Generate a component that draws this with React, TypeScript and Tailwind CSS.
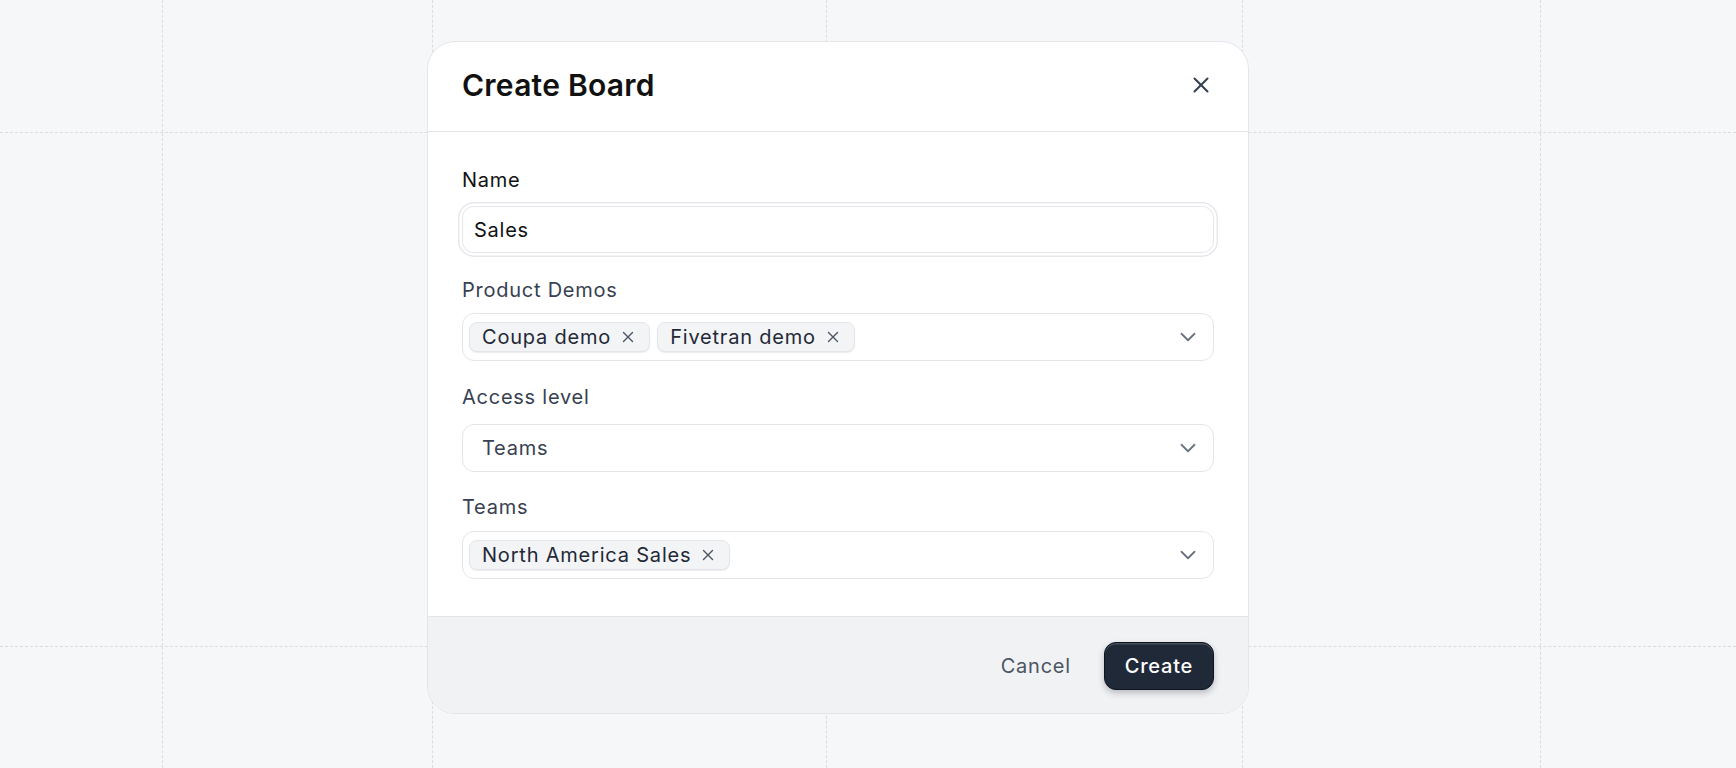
import React from 'react';
import { X, ChevronDown } from 'lucide-react';

const font = { fontFamily: 'Inter, "Noto Sans", sans-serif' };

const Chip: React.FC<{ label: string }> = ({ label }) => (
  <span className="flex h-[30px] items-center gap-[11px] rounded-[8px] border border-[#e3e5e9] bg-[#f3f4f6] pl-[12px] pr-[15px] text-[20px] leading-[28px] tracking-[0.8px] text-[#1f2937] shadow-[0_1px_1px_rgba(17,24,39,0.08)]">
    {label}
    <svg width="12" height="12" viewBox="0 0 12 12" className="text-[#4b5563]">
      <path d="M1.5 1.5l9 9M10.5 1.5l-9 9" stroke="currentColor" strokeWidth="1.4" strokeLinecap="round" />
    </svg>
  </span>
);

const SelectField: React.FC<{ children: React.ReactNode; padded?: boolean }> = ({ children, padded }) => (
  <div
    className={`flex h-[48px] items-center justify-between rounded-[12px] border-[1.5px] border-[#e3e5e9] bg-white pr-[12px] ${
      padded ? 'pl-[19px]' : 'pl-[6px]'
    }`}
  >
    <div className="flex items-center gap-[7px]">{children}</div>
    <ChevronDown size={26} strokeWidth={1.7} className="text-[#6b7280]" />
  </div>
);

const GridBackground: React.FC = () => {
  const cols = ['w-[163px]', 'w-[270px]', 'w-[394px]', 'w-[416px]', 'w-[298px]', 'flex-1'];
  const rows = ['h-[133px]', 'h-[514px]', 'flex-1'];
  return (
    <div className="flex h-full w-full flex-col">
      {rows.map((r, ri) => (
        <div key={ri} className={`flex ${r} ${ri < rows.length - 1 ? 'border-b border-dashed border-[#d9dce1]' : ''}`}>
          {cols.map((c, ci) => (
            <div key={ci} className={`${c} ${ci < cols.length - 1 ? 'border-r border-dashed border-[#d9dce1]' : ''}`} />
          ))}
        </div>
      ))}
    </div>
  );
};

const App: React.FC = () => {
  return (
    <div className="relative h-screen w-full overflow-hidden bg-[#f6f7f9]" style={font}>
      <GridBackground />

      {/* Dialog */}
      <div className="absolute inset-0 pl-[427px] pt-[41px]">
        <div className="flex w-[822px] flex-col overflow-hidden rounded-[28px] border-[1.5px] border-[#e3e5e9] bg-white">
          {/* Header */}
          <div className="flex h-[90px] items-center justify-between border-b-[1.5px] border-[#e3e5e9] pb-[4px] pl-[34px] pr-[31px]">
            <h2 className="text-[30px] font-semibold leading-[36px] tracking-[0.25px] text-[#111111]">Create Board</h2>
            <button className="flex h-[32px] w-[32px] items-center justify-center text-[#374151]">
              <X size={26} strokeWidth={1.9} />
            </button>
          </div>

          {/* Body */}
          <div className="flex flex-col px-[34px] pb-[37px] pt-[34px] tracking-[0.75px]">
            <label className="mb-[12px] text-[20px] leading-[28px] text-[#111111]">Name</label>
            <div className="rounded-[12px] border-[1.5px] border-[#e3e5e9] shadow-[0_0_0_2.5px_#ffffff,0_0_0_4px_#e6e8eb]">
              <input
                defaultValue="Sales"
                className="h-[45px] w-full rounded-[12px] bg-white pl-[11px] text-[20px] tracking-[0.75px] text-[#111111] outline-none"
                style={font}
              />
            </div>

            <label className="mb-[9px] mt-[23px] text-[20px] leading-[28px] text-[#374151]">Product Demos</label>
            <SelectField>
              <Chip label="Coupa demo" />
              <Chip label="Fivetran demo" />
            </SelectField>

            <label className="mb-[13px] mt-[22px] text-[20px] leading-[28px] text-[#374151]">Access level</label>
            <SelectField padded>
              <span className="text-[20px] leading-[28px] text-[#374151]">Teams</span>
            </SelectField>

            <label className="mb-[10px] mt-[21px] text-[20px] leading-[28px] text-[#374151]">Teams</label>
            <SelectField>
              <Chip label="North America Sales" />
            </SelectField>
          </div>

          {/* Footer */}
          <div className="flex h-[97px] items-center justify-end gap-[13px] border-t-[1.5px] border-[#e3e5e9] bg-[#f1f2f4] pr-[34px] pt-[1px] tracking-[0.75px]">
            <button className="px-[20px] text-[20px] leading-[28px] text-[#4b5563]">Cancel</button>
            <button className="h-[48px] rounded-[12px] border-[1.5px] border-[#0f1520] bg-[#1f2937] px-[20px] text-[20px] font-medium text-white shadow-[inset_0_1.5px_0_rgba(255,255,255,0.18),0_3px_6px_rgba(17,24,39,0.25)]">
              Create
            </button>
          </div>
        </div>
      </div>
    </div>
  );
};

export default App;
